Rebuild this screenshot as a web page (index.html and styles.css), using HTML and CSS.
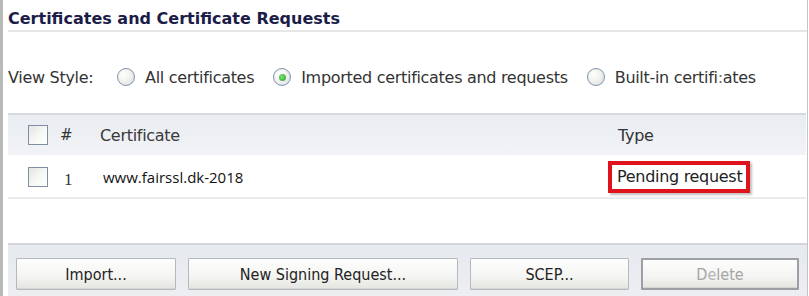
FILE: index.html
```html
<!DOCTYPE html>
<html>
<head>
<meta charset="utf-8">
<link rel="stylesheet" href="styles.css">
</head>
<body>
<div class="frame">
  <div class="content">
    <h1 class="title">Certificates and Certificate Requests</h1>
    <div class="view">
      <span class="view-label">View Style:</span>
      <label class="opt"><span class="radio"></span><span>All certificates</span></label>
      <label class="opt"><span class="radio checked"></span><span>Imported certificates and requests</span></label>
      <label class="opt"><span class="radio"></span><span>Built-in certifi<span class="smudge">:</span>ates</span></label>
    </div>
    <div class="table">
      <div class="row head">
        <span class="check"></span>
        <span class="num">#</span>
        <span class="cert">Certificate</span>
        <span class="type">Type</span>
      </div>
      <div class="row body">
        <span class="check"></span>
        <span class="num n1">1</span>
        <span class="cert name">www.fairssl.dk-2018</span>
        <span class="type"><span class="highlight">Pending request</span></span>
      </div>
    </div>
    <div class="spacer"></div>
    <div class="toolbar">
      <button class="btn b-import">Import...</button>
      <button class="btn b-new">New Signing Request...</button>
      <button class="btn b-scep">SCEP...</button>
      <button class="btn b-delete" disabled>D<span class="smudge">e</span>lete</button>
    </div>
  </div>
</div>
</body>
</html>
```

FILE: styles.css
```css
html, body {
  margin: 0;
  padding: 0;
  background: #ffffff;
}
body {
  font-family: "DejaVu Sans", Verdana, sans-serif;
  color: #2a2a2a;
  width: 809px;
  height: 296px;
  overflow: hidden;
}
.frame {
  box-sizing: border-box;
  width: 808px;
  height: 296px;
  border-left: 3px solid #b9b9b9;
  border-right: 1px solid #c4c4c4;
}
.content {
  padding-left: 5px;
  display: flex;
  flex-direction: column;
  height: 100%;
}
.title {
  margin: 0;
  height: 32px;
  box-sizing: border-box;
  padding-top: 9px;
  font-size: 16px;
  line-height: 19px;
  font-weight: bold;
  color: #1c1c48;
  letter-spacing: 0;
  border-bottom: 2px solid #e6e6e6;
}
.view {
  display: flex;
  align-items: center;
  height: 48px;
  margin-top: 21px;
  margin-bottom: 12px;
  font-size: 16px;
  color: #333;
  letter-spacing: -0.3px;
}
.view-label {
  width: 109px;
}
.opt {
  display: flex;
  align-items: center;
  margin-right: 19px;
}
.radio {
  box-sizing: border-box;
  width: 18px;
  height: 18px;
  border-radius: 50%;
  border: 1.5px solid #7e93ad;
  background: radial-gradient(circle at 35% 35%, #ffffff 0%, #f3f3f0 40%, #d9dbe0 100%);
  margin-right: 10px;
  display: flex;
  align-items: center;
  justify-content: center;
}
.radio.checked::after {
  content: "";
  width: 7px;
  height: 7px;
  border-radius: 50%;
  background: radial-gradient(circle at 40% 40%, #7ee07e, #21a321);
}
.smudge {
  color: #6a6a6a;
}
.table {
  margin-right: 1px;
}
.row {
  display: flex;
  align-items: center;
  box-sizing: border-box;
  padding-left: 20px;
  font-size: 16px;
}
.row.head {
  height: 42px;
  border-top: 2px solid #d5d8dd;
  background: linear-gradient(#e9ecf1, #f1f3f6);
  color: #3a3a3a;
  letter-spacing: -0.3px;
}
.row.body {
  height: 44px;
  border-bottom: 2px solid #ebebeb;
  padding-top: 1px;
}
.check {
  box-sizing: border-box;
  width: 20px;
  height: 20px;
  border: 1.5px solid #7f8fa3;
  background: linear-gradient(135deg, #e4e4e0 0%, #f6f6f4 50%, #ffffff 100%);
}
.num {
  width: 52px;
  padding-left: 12px;
  box-sizing: border-box;
  font-size: 15px;
  color: #333;
}
.num.n1 {
  padding-left: 16px;
  padding-top: 6px;
  font-family: "Liberation Serif", serif;
  font-size: 17px;
}
.cert {
  width: 518px;
}
.cert.name {
  font-family: "Open Sans", Arial, sans-serif;
  font-size: 15px;
  padding-left: 3px;
  box-sizing: border-box;
  color: #111;
}
.type {
  color: #333;
}
.highlight {
  display: inline-block;
  margin-left: -10px;
  padding: 2px 4px 3px 5px;
  border: 4px solid #e0141c;
  box-shadow: 2px 2px 2px rgba(0,0,0,0.25);
  background: #fff;
  color: #222;
  letter-spacing: -0.3px;
  font-size: 16px;
}
.spacer {
  height: 44px;
}
.toolbar {
  flex: 1;
  display: flex;
  align-items: flex-start;
  gap: 12px;
  padding: 13px 0 0 8px;
  border-top: 2px solid #d2d6dc;
  background: linear-gradient(#e6e9ee, #eceef2);
}
.btn {
  height: 32px;
  font-family: "DejaVu Sans Condensed", "DejaVu Sans", sans-serif;
  font-size: 16px;
  color: #222;
  border: 1px solid #b4b8bf;
  border-radius: 1px;
  background: linear-gradient(#fdfdfd 0%, #f4f4f2 60%, #e4e4e0 100%);
  box-shadow: inset 0 -1px 0 #d6d6d2;
  padding: 0;
}
.b-import { width: 160px; }
.b-new { width: 270px; }
.b-scep { width: 159px; }
.b-delete {
  width: 158px;
  color: #a4a4a4;
  border: 2px solid #9c9fa4;
}
.b-delete .smudge { color: #b4b4b4; }
```
